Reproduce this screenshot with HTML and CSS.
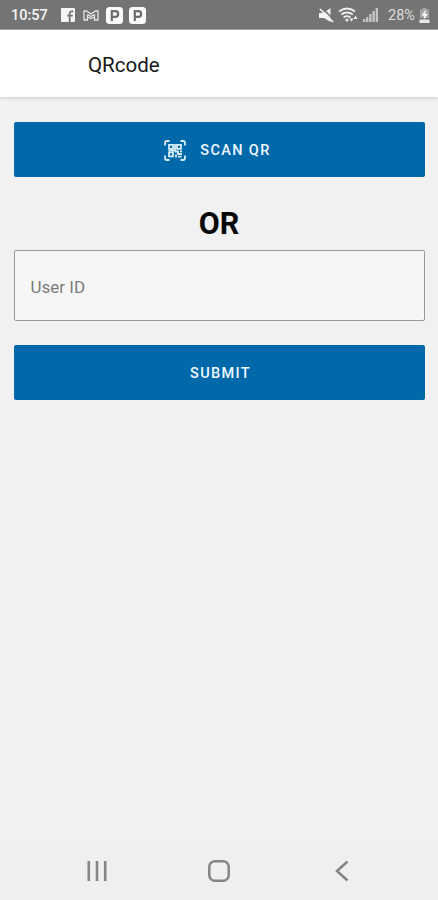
FILE: index.html
```html
<!DOCTYPE html>
<html lang="en">
<head>
<meta charset="utf-8">
<meta name="viewport" content="width=device-width, initial-scale=1">
<title>QRcode</title>
<link rel="stylesheet" href="styles.css">
</head>
<body>
<div class="screen">
  <div class="status">
    <span class="time">10:57</span>
    <svg class="fb" width="14" height="14" viewBox="0 0 14 14"><rect width="14" height="14" rx="1" fill="#f5f5f5"/><path d="M8.700 14V5.500q0-2.200 2.200-2.200h1.500M6.200 7.600h5.600" fill="none" stroke="#747474" stroke-width="1.800"/></svg>
    <svg class="mail" width="16" height="11" viewBox="0 0 16 11" fill="none" stroke="#e2e2e2" stroke-width="1.300"><path d="M1 1h2.500L8 4l4.500-3H15v9h-3.500V7L8 8.500 4.500 7v3H1zM4.500 4.500V7M11.500 4.500V7M4.500 4.500L8 6.500l3.500-2"/></svg>
    <svg class="park" width="17" height="17" viewBox="0 0 17 17"><rect width="17" height="17" rx="3.500" fill="#fafafa"/><path d="M5.800 14V4.200h3.600a2.800 2.800 0 0 1 0 5.600H6" fill="none" stroke="#6d6d6d" stroke-width="2.200"/></svg>
    <svg class="park" width="17" height="17" viewBox="0 0 17 17"><rect width="17" height="17" rx="3.500" fill="#fafafa"/><path d="M5.800 14V4.200h3.600a2.800 2.800 0 0 1 0 5.600H6" fill="none" stroke="#6d6d6d" stroke-width="2.200"/></svg>
    <div class="right">
      <svg class="mute" width="15" height="15" viewBox="0 0 15 15"><path d="M0 5h4.500L11.500 0v14L5 10H0z" fill="#f4f4f4"/><path d="M3 0l12 12" stroke="#747474" stroke-width="1.600"/><path d="M1 1l13 13" stroke="#f4f4f4" stroke-width="1.700"/></svg>
      <svg class="wifi" width="20" height="16" viewBox="0 0 20 16"><path d="M1 4.500q8-6 16 0M3.200 7.500q5.800-4 11.600 0M5.600 10.400q3.400-2.400 6.800 0" fill="none" stroke="#ededed" stroke-width="1.800"/><circle cx="9" cy="13" r="1.500" fill="#ededed"/><path d="M11.500 11.500h4l-2 3.300zM15.500 12l2-3.300 2 3.300z" fill="#ededed"/></svg>
      <svg class="signal" width="15" height="14" viewBox="0 0 15 14" fill="#c6c6c6"><path d="M0 11h2.300v3H0zM3.100 9h2.300v5H3.100zM6.300 6h2.300v8H6.300zM9.500 3h2.300v11H9.500zM12.700 0H15v14h-2.300z"/></svg>
      <span class="percent">28%</span>
      <svg class="battery" width="11" height="15" viewBox="0 0 11 15"><path d="M3.500 0h4v1.500H10V10H1V1.500h2.500z" fill="#a5a5a5"/><path d="M.5 11.500h10V15H.5z" fill="#e8e8e8"/><path d="M7 1.500L2.500 7.500H5.500L4.500 12 9 6H6z" fill="#fff"/></svg>
    </div>
  </div>
  <header class="appbar"><h1>QRcode</h1></header>
  <main>
    <button class="btn">
      <svg class="qr" width="22" height="21" viewBox="0 0 22 21" fill="none" stroke="#d9edf8" stroke-width="1.800"><path d="M1 5.500V3Q1 1 3 1h2.500M16.500 1H19q2 0 2 2v2.500M21 15.500V18q0 2-2 2h-2.500M5.500 20H3q-2 0-2-2v-2.500"/><path d="M5 4.800h4v4H5zM13 4.800h4v4h-4zM5 12.300h4v4H5z"/><path d="M11 4v6.500H4.500M11 11.500h3v2.500h4M12 17.500v-3M14 16.700h3.500M16 11.300h2"/></svg>
      <span>SCAN QR</span>
    </button>
    <div class="or">OR</div>
    <input class="field" type="text" placeholder="User ID" aria-label="User ID">
    <button class="btn submit"><span>SUBMIT</span></button>
  </main>
  <nav class="navbar">
    <svg width="22" height="22" viewBox="0 0 22 22" stroke="#858585" stroke-width="2.600"><path d="M2.800 1v20M11 1v20M19.200 1v20"/></svg>
    <svg width="24" height="24" viewBox="0 0 24 24" fill="none" stroke="#858585" stroke-width="2.500"><rect x="2.300" y="2.300" width="19.400" height="19.400" rx="5.500"/></svg>
    <svg width="22" height="22" viewBox="0 0 22 22" fill="none" stroke="#858585" stroke-width="2.500"><path d="M17.500 1.500L7 11l10.500 9.500"/></svg>
  </nav>
</div>
</body>
</html>
```
FILE: styles.css
```css
* { box-sizing: border-box; }
body { margin: 0; font-family: Roboto, "Liberation Sans", sans-serif; background: #f1f1f1; }
.screen { height: 900px; display: flex; flex-direction: column; overflow: hidden; }
.status { height: 30px; flex: none; display: flex; align-items: center; padding: 1px 8px 0 11px; background: #747474; border-bottom: 1px solid #a5a5a5; color: #f4f4f4; }
.time { width: 50px; padding-top: 2px; font-size: 14.5px; font-weight: 500; line-height: 18px; }
.mail { margin-left: 8px; }
.park { margin-left: 7px; }
.park + .park { margin-left: 6px; }
.right { display: flex; align-items: center; margin-left: auto; }
.wifi { margin-left: 4px; }
.signal { margin-left: 5px; }
.percent { width: 31px; margin-left: 10px; padding-top: 1px; font-size: 14.500px; line-height: 18px; color: #dedede; white-space: nowrap; }
.appbar { position: relative; height: 67px; flex: none; display: flex; align-items: center; padding-left: 88px; background: #fff; box-shadow: 0 1px 3px rgba(0, 0, 0, .16); }
.appbar h1 { margin: 0; padding-top: 3px; font-size: 20.500px; font-weight: 400; line-height: 24px; color: #181818; }
main { flex: 1; display: flex; flex-direction: column; padding: 25px 13.500px 0; }
.btn { height: 55px; flex: none; display: flex; align-items: center; justify-content: center; gap: 14px; padding: 1px 3px 0 0; border: 0; border-radius: 2px; background: #0168a9; color: #eef8ff; font: 500 14.500px/20px Roboto, "Liberation Sans", sans-serif; letter-spacing: 1.350px; }
.btn span { padding-top: 1px; }
.or { margin-top: 28px; height: 36px; font-size: 30.500px; line-height: 37px; font-weight: 700; text-align: center; color: #080808; }
.field { height: 71px; margin-top: 9px; padding: 2px 16px 0; border: 1px solid #979797; border-radius: 2px; background: #f6f6f6; font: 400 17px/22px Roboto, "Liberation Sans", sans-serif; color: #222; outline: 0; }
.field::placeholder { color: #7c7c7c; opacity: 1; }
.submit { margin-top: 24px; padding: 1px 0 0 3px; }
.navbar { height: 58px; flex: none; display: flex; align-items: center; justify-content: space-between; padding: 0 86px; background: #efefef; }
```
